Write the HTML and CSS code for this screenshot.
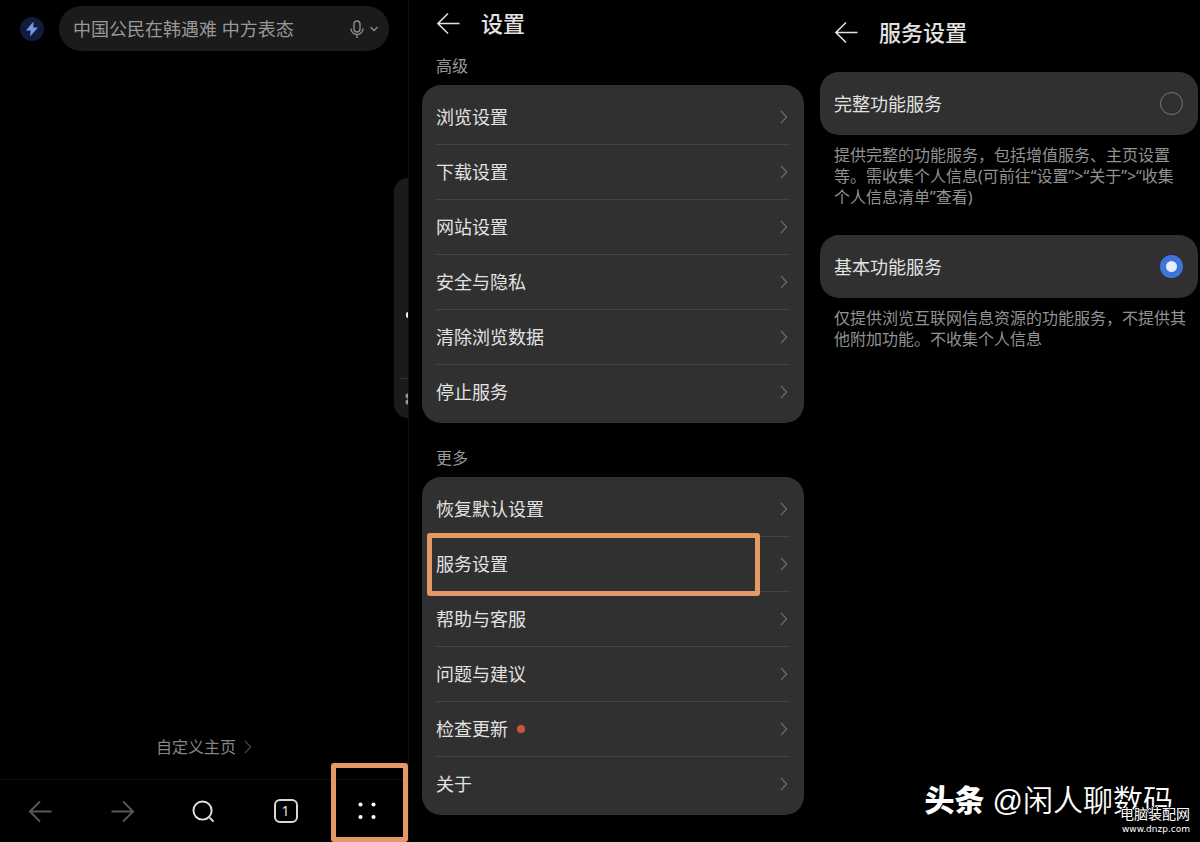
FILE: index.html
```html
<!DOCTYPE html>
<html lang="zh-CN">
<head>
    <meta charset="UTF-8">
    <meta name="viewport" content="width=device-width, initial-scale=1.0">
    <title>浏览器设置</title>
    <link rel="stylesheet" href="styles.css">
</head>
<body>
    <!-- Shared icons -->
    <svg class="sprite" aria-hidden="true">
        <symbol id="arrow-left" viewBox="0 0 24 24">
            <path d="M23.5 12H1M11.5 1.5L1 12l10.5 10.5" />
        </symbol>
        <symbol id="arrow-right" viewBox="0 0 24 24">
            <path d="M.5 12H23M12.5 1.5L23 12 12.5 22.5" />
        </symbol>
        <symbol id="chevron" viewBox="0 0 8 16">
            <path d="M.5 1L7 8 .5 15" />
        </symbol>
    </svg>

    <main class="screens">
        <!-- Home page -->
        <section class="screen home">
            <div class="search-bar">
                <button class="bolt" aria-label="加速">
                    <svg viewBox="0 0 24 24"><path d="M13.5 4.5L6 13.5h4.7L10 19.5l8-9h-4.7z" /></svg>
                </button>
                <div class="search-box">
                    <input type="text" aria-label="搜索" placeholder="中国公民在韩遇难 中方表态">
                    <button class="voice" aria-label="语音搜索">
                        <svg class="icon mic" viewBox="0 0 14 18">
                            <rect x="4" y="1" width="6" height="11" rx="3" />
                            <path d="M1 8.5a6 6 0 0 0 12 0M7 14.5V18" />
                        </svg>
                        <svg class="icon caret" viewBox="0 0 8 6"><path d="M.5 1L4 4.5 7.5 1" /></svg>
                    </button>
                </div>
            </div>

            <div class="side-panel">
                <span class="side-dot"></span>
                <span class="side-more"></span>
            </div>

            <a class="custom-home" href="#">自定义主页 <svg class="icon chevron"><use href="#chevron" /></svg></a>

            <nav class="toolbar">
                <button class="dim" aria-label="后退"><svg class="icon arrow"><use href="#arrow-left" /></svg></button>
                <button class="dim" aria-label="前进"><svg class="icon arrow"><use href="#arrow-right" /></svg></button>
                <button aria-label="搜索">
                    <svg class="icon tool" viewBox="0 0 24 24"><circle cx="11" cy="11" r="9.5" /><path d="M18.5 18.5l4 4" /></svg>
                </button>
                <button aria-label="标签页"><span class="tabs">1</span></button>
                <button class="menu" aria-label="菜单">
                    <svg class="dots" viewBox="0 0 24 24">
                        <circle cx="6" cy="6" r="1.9" /><circle cx="18" cy="6" r="1.9" />
                        <circle cx="6" cy="17.5" r="1.9" /><circle cx="18" cy="17.5" r="1.9" />
                    </svg>
                    <span class="mark mark-menu"></span>
                </button>
            </nav>
        </section>

        <!-- Settings list -->
        <section class="screen settings">
            <header class="title-bar">
                <button aria-label="返回"><svg class="icon arrow"><use href="#arrow-left" /></svg></button>
                <h1>设置</h1>
            </header>

            <h2>高级</h2>
            <div class="card">
                <a class="row" href="#">浏览设置 <svg class="icon chevron"><use href="#chevron" /></svg></a>
                <a class="row" href="#">下载设置 <svg class="icon chevron"><use href="#chevron" /></svg></a>
                <a class="row" href="#">网站设置 <svg class="icon chevron"><use href="#chevron" /></svg></a>
                <a class="row" href="#">安全与隐私 <svg class="icon chevron"><use href="#chevron" /></svg></a>
                <a class="row" href="#">清除浏览数据 <svg class="icon chevron"><use href="#chevron" /></svg></a>
                <a class="row" href="#">停止服务 <svg class="icon chevron"><use href="#chevron" /></svg></a>
            </div>

            <h2>更多</h2>
            <div class="card">
                <a class="row" href="#">恢复默认设置 <svg class="icon chevron"><use href="#chevron" /></svg></a>
                <a class="row" href="#">服务设置 <svg class="icon chevron"><use href="#chevron" /></svg><span class="mark mark-row"></span></a>
                <a class="row" href="#">帮助与客服 <svg class="icon chevron"><use href="#chevron" /></svg></a>
                <a class="row" href="#">问题与建议 <svg class="icon chevron"><use href="#chevron" /></svg></a>
                <a class="row" href="#">检查更新 <span class="new-dot"></span><svg class="icon chevron"><use href="#chevron" /></svg></a>
                <a class="row" href="#">关于 <svg class="icon chevron"><use href="#chevron" /></svg></a>
            </div>
        </section>

        <!-- Service settings -->
        <section class="screen service">
            <header class="title-bar">
                <button aria-label="返回"><svg class="icon arrow"><use href="#arrow-left" /></svg></button>
                <h1>服务设置</h1>
            </header>

            <label class="option" for="service-full">完整功能服务
                <input type="radio" id="service-full" name="service">
            </label>
            <p>提供完整的功能服务，包括增值服务、主页设置等。需收集个人信息(可前往“设置”&gt;“关于”&gt;“收集个人信息清单”查看)</p>

            <label class="option" for="service-basic">基本功能服务
                <input type="radio" id="service-basic" name="service" checked>
            </label>
            <p>仅提供浏览互联网信息资源的功能服务，不提供其他附加功能。不收集个人信息</p>
        </section>
    </main>

    <!-- Watermarks -->
    <div class="author"><b>头条</b> <span>@闲人聊数码</span></div>
    <div class="site">电脑装配网<small>www.dnzp.com</small></div>
</body>
</html>
```

FILE: styles.css
```css
* {
    box-sizing: border-box;
}

body {
    margin: 0;
    background: #000;
    color: #e2e2e2;
    font-family: "Noto Sans", "Noto Sans CJK SC", sans-serif;
    font-size: 18px;
    line-height: 24px;
    position: relative;
}

a {
    color: inherit;
    text-decoration: none;
}

button {
    padding: 0;
    border: none;
    background: none;
    color: inherit;
    font: inherit;
    cursor: pointer;
}

svg {
    display: block;
}

.sprite {
    display: none;
}

.icon {
    flex: none;
    fill: none;
    stroke: currentColor;
    stroke-width: 2;
    overflow: visible;
}

.arrow {
    width: 23px;
    height: 23px;
}

.chevron {
    width: 8px;
    height: 14px;
    color: #6b6b6b;
    stroke-width: 1.5;
}

.screens {
    display: grid;
    grid-template-columns: 34% 33.5% 32.5%;
    min-height: 100vh;
}

/* Home page */
.home {
    position: relative;
    display: flex;
    flex-direction: column;
    box-shadow: 1px 0 #0c0c0c;
}

.search-bar {
    display: flex;
    align-items: center;
    gap: 15px;
    padding: 6px 19px 0 20px;
}

.bolt {
    width: 24px;
    height: 24px;
    border-radius: 50%;
    background: #101c3c;
}

.bolt svg {
    fill: #7898ea;
}

.search-box {
    flex: 1;
    min-width: 0;
    display: flex;
    align-items: center;
    height: 45px;
    padding: 0 11px 0 14px;
    border-radius: 23px;
    background: #1b1b1b;
}

.search-box input {
    flex: 1;
    min-width: 0;
    padding: 0;
    border: none;
    outline: none;
    background: none;
    color: #999;
    font: inherit;
}

.search-box input::placeholder {
    color: #999;
    opacity: 1;
}

.voice {
    display: flex;
    align-items: center;
    gap: 6px;
    color: #8c8c8c;
}

.mic {
    width: 14px;
    height: 18px;
    stroke-width: 1.4;
}

.caret {
    width: 8px;
    height: 6px;
    stroke-width: 1.4;
}

.side-panel {
    position: absolute;
    top: 178px;
    right: 0;
    width: 14px;
    height: 240px;
    border-radius: 14px 0 0 14px;
    background: #1b1b1b;
    overflow: hidden;
}

.side-dot {
    position: absolute;
    top: 134px;
    right: 0;
    width: 2px;
    height: 6px;
    border-radius: 2px 0 0 2px;
    background: #eee;
}

.side-more {
    position: absolute;
    top: 200px;
    right: 0;
    width: 8px;
    height: 28px;
    border-top: 1px solid #333;
    background: radial-gradient(circle at 8px 17px, #999 2px, transparent 3px),
                radial-gradient(circle at 8px 23px, #999 2px, transparent 3px);
}

.custom-home {
    display: flex;
    justify-content: center;
    align-items: center;
    gap: 8px;
    margin-top: auto;
    padding-bottom: 20px;
    color: #858585;
    font-size: 16px;
}

.custom-home .chevron {
    color: #484848;
}

.toolbar {
    display: grid;
    grid-template-columns: repeat(5, 1fr);
    height: 63px;
    border-top: 1px solid #0e0f11;
}

.toolbar button {
    display: flex;
    justify-content: center;
    align-items: center;
}

.toolbar .dim {
    color: #595959;
}

.tool {
    width: 23px;
    height: 23px;
}

.tabs {
    width: 24px;
    height: 24px;
    border: 2px solid #d8d8d8;
    border-radius: 6px;
    font-size: 14px;
    line-height: 20px;
}

.dots {
    width: 26px;
    height: 26px;
    fill: #fff;
}

.menu {
    position: relative;
}

/* Orange callout frames */
.mark {
    position: absolute;
    border: 5px solid #e39a66;
    border-radius: 3px;
    pointer-events: none;
}

.mark-menu {
    inset: -17px 0 0 5px;
}

.mark-row {
    inset: -4px 30px -5px -9px;
}

/* Title bars */
.title-bar {
    display: flex;
    align-items: center;
    gap: 21px;
    height: 46px;
    padding-left: 15px;
}

.title-bar .arrow {
    stroke-width: 1.6;
}

h1 {
    margin: 0;
    font-size: 22px;
    font-weight: 500;
    line-height: 30px;
}

/* Settings list */
.settings {
    padding: 0 6px 0 14px;
}

h2 {
    margin: 8px 14px 7px;
    color: #9a9a9a;
    font-size: 16px;
    font-weight: 400;
    line-height: 24px;
}

.card {
    padding: 5px 14px 3px;
    border-radius: 19px;
    background: #303030;
}

.card + h2 {
    margin-top: 23px;
}

.row {
    position: relative;
    display: flex;
    align-items: center;
    height: 55px;
    border-bottom: 1px solid #434343;
}

.row:last-child {
    border-color: transparent;
}

.row .chevron {
    margin-left: auto;
    margin-right: 2px;
}

.new-dot {
    width: 8px;
    height: 8px;
    margin-left: 9px;
    border-radius: 50%;
    background: #cd5547;
}

/* Service settings */
.service {
    padding: 0 2px 0 10px;
}

.service .title-bar {
    height: 64px;
    margin-bottom: 8px;
}

.option {
    display: flex;
    justify-content: space-between;
    align-items: center;
    height: 63px;
    padding: 0 15px 0 14px;
    border-radius: 19px;
    background: #303030;
    cursor: pointer;
}

.option input {
    appearance: none;
    width: 23px;
    height: 23px;
    margin: 0;
    border: 1px solid #777;
    border-radius: 50%;
}

.option input:checked {
    border: 6px solid #3f74da;
    background: #e6edfb;
}

.service p {
    margin: 10px 10px 27px 14px;
    color: #929292;
    font-size: 16px;
    line-height: 21px;
}

/* Watermarks */
.author {
    position: absolute;
    right: 27px;
    bottom: 21px;
    display: flex;
    align-items: center;
    gap: 8px;
    color: #fff;
    font-family: "Liberation Sans", "Noto Sans CJK SC", sans-serif;
    font-size: 30px;
    line-height: 40px;
}

.author b {
    font-weight: 900;
}

.author span {
    font-weight: 350;
}

.site {
    position: absolute;
    right: 10px;
    bottom: 6px;
    color: #fff;
    font-size: 14px;
    line-height: 16px;
    text-align: right;
    text-shadow: 1px 0 #000, -1px 0 #000, 0 1px #000, 0 -1px #000;
}

.site small {
    display: block;
    font-family: "DejaVu Sans", sans-serif;
    font-size: 9px;
    line-height: 14px;
}
```
